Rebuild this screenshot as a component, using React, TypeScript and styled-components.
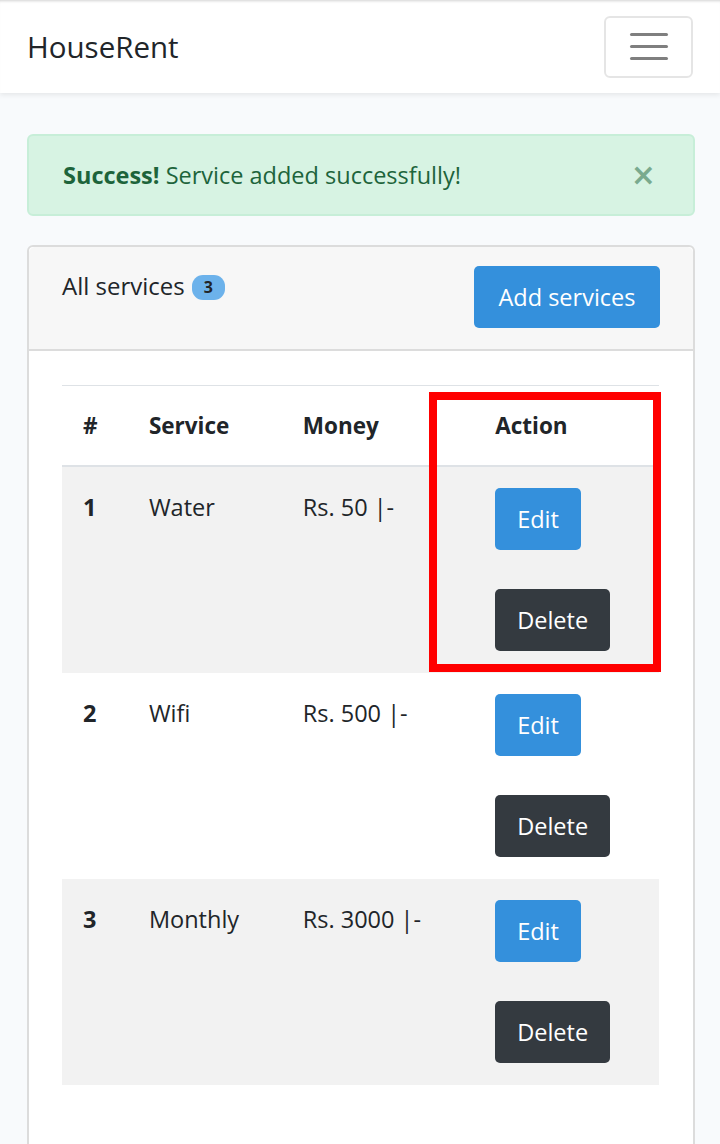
import React from "react";
import styled, { createGlobalStyle } from "styled-components";

const GlobalStyle = createGlobalStyle`
  html, body {
    margin: 0;
    padding: 0;
    background: #f8fafc;
    font-family: "Open Sans", "Noto Sans", sans-serif;
    color: #212529;
  }
  * { box-sizing: border-box; }
`;

const NavBar = styled.nav`
  display: flex;
  align-items: center;
  justify-content: space-between;
  height: 93px;
  padding: 0 27px 0 27px;
  background: #ffffff;
  box-shadow: 0 2px 5px rgba(0, 0, 0, 0.08), inset 0 3px 3px -2px rgba(0, 0, 0, 0.18);
`;

const Brand = styled.a`
  font-size: 29.5px;
  color: #212529;
  text-decoration: none;
`;

const Toggler = styled.button`
  width: 89px;
  height: 62px;
  display: flex;
  flex-direction: column;
  align-items: center;
  justify-content: center;
  gap: 9px;
  background: transparent;
  border: 2px solid rgba(0, 0, 0, 0.1);
  border-radius: 6px;
  padding: 0;
`;

const TogglerLine = styled.span`
  display: block;
  width: 38px;
  height: 3px;
  border-radius: 2px;
  background: rgba(0, 0, 0, 0.5);
`;

const Main = styled.main`
  padding: 41px 25px 0 27px;
  display: flex;
  flex-direction: column;
  gap: 29px;
`;

const Alert = styled.div`
  display: flex;
  align-items: center;
  justify-content: space-between;
  height: 82px;
  padding: 0 37px 0 34px;
  background: #d7f3e3;
  border: 2px solid #c7eed8;
  border-radius: 6px;
  color: #1d643b;
  font-size: 23.5px;
`;

const Strong = styled.strong`
  font-weight: 700;
`;

const Close = styled.button`
  background: transparent;
  border: none;
  padding: 0;
  font-family: "DejaVu Sans", sans-serif;
  font-size: 30px;
  font-weight: 700;
  line-height: 1;
  color: #1d643b;
  opacity: 0.5;
`;

const Card = styled.section`
  background: #ffffff;
  border: 2px solid #dcdcdc;
  border-radius: 6px;
  min-height: 920px;
`;

const CardHeader = styled.header`
  display: flex;
  align-items: flex-start;
  justify-content: space-between;
  padding: 19px 33px 21px 33px;
  background: #f7f7f7;
  border-bottom: 2px solid #dcdcdc;
  border-radius: 6px 6px 0 0;
`;

const Title = styled.div`
  display: flex;
  align-items: center;
  gap: 7px;
  font-size: 24px;
  line-height: 40px;
`;

const Badge = styled.span`
  display: inline-flex;
  align-items: center;
  justify-content: center;
  width: 33px;
  height: 25px;
  border-radius: 11px;
  background: #6cb2eb;
  color: #212529;
  font-size: 16px;
  font-weight: 700;
  margin-top: 2px;
`;

const Button = styled.button<{ $variant: "primary" | "dark"; $wide?: boolean }>`
  height: 62px;
  padding: 0 ${(p) => (p.$wide ? "24.5px" : "22px")};
  border: none;
  border-radius: 5px;
  font-family: inherit;
  font-size: 23.5px;
  color: #ffffff;
  background: ${(p) => (p.$variant === "primary" ? "#3490dc" : "#343a40")};
`;

const CardBody = styled.div`
  padding: 34px 34px 0 33px;
`;

const TableWrap = styled.div`
  position: relative;
`;

const Table = styled.table`
  width: 100%;
  border-collapse: collapse;
  font-size: 23.5px;
`;

const Th = styled.th`
  height: 80px;
  padding: 0 21px;
  text-align: left;
  font-size: 22.5px;
  font-weight: 700;
  border-top: 1px solid #dee2e6;
  border-bottom: 2px solid #dee2e6;
  vertical-align: middle;
`;

const Tr = styled.tr<{ $striped: boolean }>`
  background: ${(p) => (p.$striped ? "#f2f2f2" : "transparent")};
  & + & td {
    border-top: 1px solid #dee2e6;
  }
`;

const Td = styled.td<{ $bold?: boolean }>`
  padding: 21px 21px 22px 21px;
  vertical-align: top;
  line-height: 38px;
  font-weight: ${(p) => (p.$bold ? 700 : 400)};
`;

const Actions = styled.div`
  display: flex;
  flex-direction: column;
  align-items: flex-start;
  gap: 39px;
`;

const Highlight = styled.div`
  position: absolute;
  left: 367px;
  top: 7px;
  width: 232px;
  height: 280px;
  border: 8px solid #ff0000;
  pointer-events: none;
`;

const services = [
  { id: 1, name: "Water", money: "Rs. 50 |-" },
  { id: 2, name: "Wifi", money: "Rs. 500 |-" },
  { id: 3, name: "Monthly", money: "Rs. 3000 |-" },
];

export default function App() {
  return (
    <>
      <GlobalStyle />
      <NavBar>
        <Brand href="#">HouseRent</Brand>
        <Toggler aria-label="Toggle navigation">
          <TogglerLine />
          <TogglerLine />
          <TogglerLine />
        </Toggler>
      </NavBar>
      <Main>
        <Alert>
          <span>
            <Strong>Success!</Strong> Service added successfully!
          </span>
          <Close aria-label="Close">×</Close>
        </Alert>
        <Card>
          <CardHeader>
            <Title>
              All services <Badge>3</Badge>
            </Title>
            <Button $variant="primary" $wide>
              Add services
            </Button>
          </CardHeader>
          <CardBody>
            <TableWrap>
              <Table>
                <colgroup>
                  <col style={{ width: 66 }} />
                  <col style={{ width: 154 }} />
                  <col style={{ width: 193 }} />
                  <col style={{ width: 185 }} />
                </colgroup>
                <thead>
                  <tr>
                    <Th>#</Th>
                    <Th>Service</Th>
                    <Th>Money</Th>
                    <Th>Action</Th>
                  </tr>
                </thead>
                <tbody>
                  {services.map((s, i) => (
                    <Tr key={s.id} $striped={i % 2 === 0}>
                      <Td $bold>{s.id}</Td>
                      <Td>{s.name}</Td>
                      <Td>{s.money}</Td>
                      <Td>
                        <Actions>
                          <Button $variant="primary">Edit</Button>
                          <Button $variant="dark">Delete</Button>
                        </Actions>
                      </Td>
                    </Tr>
                  ))}
                </tbody>
              </Table>
              <Highlight />
            </TableWrap>
          </CardBody>
        </Card>
      </Main>
    </>
  );
}
